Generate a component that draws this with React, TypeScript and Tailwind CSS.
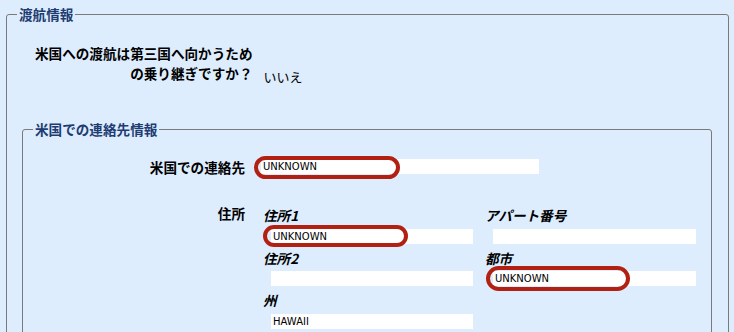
import React from "react";

const Field = ({ value, w, oval }: { value?: string; w: string; oval?: string }) => (
  <div className={`relative h-[15px] bg-white ${w}`}>
    <span className="block pl-[2px] font-['DejaVu_Sans',sans-serif] text-[10px] leading-[15px] text-black">
      {value}
    </span>
    {oval && (
      <div className={`pointer-events-none absolute rounded-full border-[4px] border-[#b22012] ${oval}`} />
    )}
  </div>
);

export default function App() {
  return (
    <div className="w-[734px] h-[332px] overflow-hidden bg-[#ddedfd] pt-[6px] pl-[6px] pr-[5px] font-['Noto_Sans_CJK_JP','DejaVu_Sans',sans-serif] text-black">
      <fieldset className="border border-[#7a7a7a] rounded-[3px] h-[420px]">
        <legend className="ml-[10px] px-[2px] text-[13.6px] leading-[16px] font-bold text-[#1e3c72]">
          渡航情報
        </legend>

        <div className="flex items-start mt-[21px] pl-[28px]">
          <div className="text-right text-[13.6px] leading-[20px] font-bold">
            米国への渡航は第三国へ向かうため
            <br />
            の乗り継ぎですか？
          </div>
          <div className="ml-[11px] mt-[24px] text-[13px] leading-[20px]">いいえ</div>
        </div>

        <fieldset className="mt-[34px] ml-[15px] mr-[16px] border border-[#7a7a7a] rounded-[3px] h-[300px]">
          <legend className="ml-[10px] px-[2px] text-[13.6px] leading-[16px] font-bold text-[#1e3c72]">
            米国での連絡先情報
          </legend>

          <div className="flex items-start mt-[22px]">
            <div className="w-[222px] text-right text-[13.6px] leading-[16px] font-bold">米国での連絡先</div>
            <div className="ml-[16px]">
              <Field value="UNKNOWN" w="w-[278px]" oval="-left-[7px] -top-[3px] w-[146px] h-[23px]" />
            </div>
          </div>

          <div className="flex items-start mt-[30px]">
            <div className="w-[222px] text-right text-[13.6px] leading-[16px] font-bold">住所</div>
            <div className="ml-[16px] pt-[2px] grid grid-cols-[222px_220px]">
              <div className="flex flex-col">
                <div className="pl-[2px] text-[13.6px] leading-[16px] font-bold italic">住所1</div>
                <div className="ml-[10px] mt-[6px]">
                  <Field value="UNKNOWN" w="w-[202px]" oval="-left-[8px] -top-[4px] w-[145px] h-[22px]" />
                </div>
                <div className="pl-[2px] mt-[6px] text-[13.6px] leading-[16px] font-bold italic">住所2</div>
                <div className="ml-[10px] mt-[5px]">
                  <Field w="w-[202px]" />
                </div>
                <div className="pl-[2px] mt-[6px] text-[13.6px] leading-[16px] font-bold italic">州</div>
                <div className="ml-[10px] mt-[6px]">
                  <Field value="HAWAII" w="w-[202px]" />
                </div>
              </div>
              <div className="flex flex-col">
                <div className="pl-[2px] text-[13.6px] leading-[16px] font-bold italic">アパート番号</div>
                <div className="ml-[10px] mt-[6px]">
                  <Field w="w-[203px]" />
                </div>
                <div className="pl-[2px] mt-[6px] text-[13.6px] leading-[16px] font-bold italic">都市</div>
                <div className="ml-[10px] mt-[5px]">
                  <Field value="UNKNOWN" w="w-[203px]" oval="-left-[7px] -top-[5px] w-[144px] h-[25px]" />
                </div>
              </div>
            </div>
          </div>
        </fieldset>
      </fieldset>
    </div>
  );
}
